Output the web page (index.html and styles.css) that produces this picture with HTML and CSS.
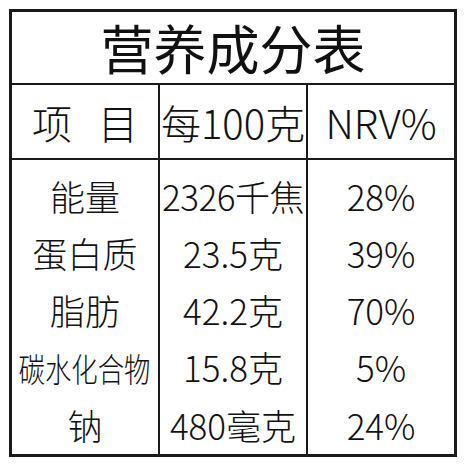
FILE: index.html
```html
<!DOCTYPE html>
<html lang="zh-CN">
<head>
  <meta charset="UTF-8" />
  <meta name="viewport" content="width=device-width, initial-scale=1.0"/>
  <title>营养成分表</title>
  <link rel="stylesheet" href="styles.css">
</head>
<body>
  <table class="nutrition">
    <tr class="title-row">
      <th colspan="3">营养成分表</th>
    </tr>
    <tr class="head-row">
      <td>项<span class="gap"></span>目</td>
      <td>每100克</td>
      <td>NRV%</td>
    </tr>
    <tr class="data-row first">
      <td>能量</td>
      <td><span class="tight">2326千焦</span></td>
      <td>28%</td>
    </tr>
    <tr class="data-row">
      <td>蛋白质</td>
      <td>23.5克</td>
      <td>39%</td>
    </tr>
    <tr class="data-row">
      <td>脂肪</td>
      <td>42.2克</td>
      <td>70%</td>
    </tr>
    <tr class="data-row">
      <td><span class="squeeze">碳水化合物</span></td>
      <td>15.8克</td>
      <td>5%</td>
    </tr>
    <tr class="data-row last">
      <td>钠</td>
      <td>480毫克</td>
      <td>24%</td>
    </tr>
  </table>
</body>
</html>
```

FILE: styles.css
```css
body {
  margin: 0;
  padding: 9px;
  background-color: #fff;
  font-family: "Noto Sans CJK SC", "Noto Sans", sans-serif;
  color: #111;
}

.nutrition {
  width: 448px;
  border-collapse: collapse;
  border: 3px solid #1a1a1a;
  table-layout: fixed;
}

.nutrition th,
.nutrition td {
  text-align: center;
  padding: 0;
  white-space: nowrap;
  overflow: hidden;
}

.title-row th {
  height: 71px;
  font-size: 53px;
  font-weight: 400;
  line-height: 1;
  border-bottom: 2px solid #1a1a1a;
}

.head-row td {
  height: 73px;
  font-size: 40px;
  font-weight: 300;
  line-height: 1;
  border-right: 2px solid #1a1a1a;
  border-bottom: 2px solid #1a1a1a;
}

.head-row .gap {
  display: inline-block;
  width: 26px;
}

.data-row td {
  height: 57px;
  font-size: 35px;
  font-weight: 300;
  line-height: 1;
  border-right: 2px solid #1a1a1a;
}

.data-row.first td {
  padding-top: 7px;
}

.data-row.last td {
  height: 59px;
}

.tight {
  letter-spacing: -0.5px;
}

.squeeze {
  display: inline-block;
  font-size: 33px;
  transform: scaleX(0.8);
  margin: 0 -18px;
}
```
